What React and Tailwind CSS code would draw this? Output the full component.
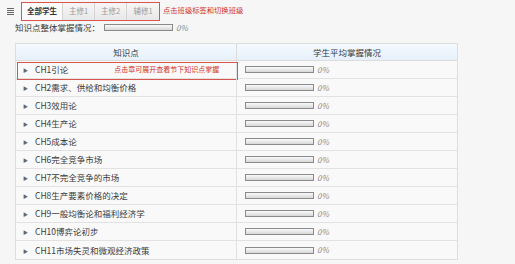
import React from "react";

const chapters = [
  "CH1引论",
  "CH2需求、供给和均衡价格",
  "CH3效用论",
  "CH4生产论",
  "CH5成本论",
  "CH6完全竞争市场",
  "CH7不完全竞争的市场",
  "CH8生产要素价格的决定",
  "CH9一般均衡论和福利经济学",
  "CH10博弈论初步",
  "CH11市场失灵和微观经济政策",
];

function Bar() {
  return (
    <div className="shrink-0 w-[69px] h-[7px] border border-[#8a8a8a] bg-gradient-to-b from-[#fafafa] to-[#d8d8d8]" />
  );
}

export default function App() {
  return (
    <div
      className="w-[515px] h-[264px] bg-[#f6f6f6] text-[#3a3a3a] text-[8.5px] leading-none overflow-hidden whitespace-nowrap"
      style={{ fontFamily: '"Noto Sans CJK SC", "Noto Sans", sans-serif' }}
    >
      {/* top tabs */}
      <div className="flex items-center h-[21px] pt-[1px]">
        <div className="w-[21px] flex justify-center">
          <div className="flex flex-col gap-[1px] w-[7px]">
            <div className="h-[1px] bg-[#666]" />
            <div className="h-[1px] bg-[#666]" />
            <div className="h-[1px] bg-[#666]" />
            <div className="h-[1px] bg-[#666]" />
          </div>
        </div>
        <div className="flex h-[19px] border border-[#d9534f] bg-gradient-to-b from-[#f6f6f6] to-[#e8e8e8] text-[7.5px]">
          <div className="w-[41px] flex items-center justify-center bg-[#fbfbfb] font-bold text-[#333] border-r border-[#d4d4d4]">
            全部学生
          </div>
          <div className="w-[32px] flex items-center justify-center text-[#9a9a9a] border-r border-[#d4d4d4]">
            主修1
          </div>
          <div className="w-[32px] flex items-center justify-center text-[#9a9a9a] border-r border-[#d4d4d4]">
            主修2
          </div>
          <div className="w-[32px] flex items-center justify-center text-[#9a9a9a]">
            辅修1
          </div>
        </div>
        <div className="ml-[3px] text-[#d0302c] text-[7.3px]">点击班级标签和切换班级</div>
      </div>

      {/* overall */}
      <div className="flex items-center h-[13px] pl-[15px]">
        <span className="shrink-0 w-[89px]">知识点整体掌握情况：</span>
        <Bar />
        <span className="ml-[3px] italic text-[#888] text-[8px]">0%</span>
      </div>

      {/* table */}
      <div className="ml-[15px] mt-[9px] w-[443px] border border-[#dedede] bg-[#f9f9f9]">
        <div className="flex h-[17px] bg-gradient-to-b from-[#f4f9fe] to-[#e6f1fb] border-b border-[#dcdcdc]">
          <div className="w-[221px] flex items-center justify-center border-r border-[#dcdcdc]">
            知识点
          </div>
          <div className="flex-1 flex items-center justify-center">学生平均掌握情况</div>
        </div>
        {chapters.map((c, i) => (
          <div key={c} className="relative flex h-[18px] border-b border-[#e2e2e2] last:border-b-0">
            <div className="w-[221px] flex items-center border-r border-[#e2e2e2]">
              <span className="w-[19px] flex justify-center text-[#666] text-[5px]">▶</span>
              <span>{c}</span>
              {i === 0 && (
                <span className="ml-[46px] text-[#d0302c] text-[7px]">点击章可展开查看节下知识点掌握</span>
              )}
            </div>
            <div className="flex-1 flex items-center pl-[8px]">
              <Bar />
              <span className="ml-[3px] italic text-[#888] text-[8px]">0%</span>
            </div>
            {i === 0 && (
              <div className="absolute left-[1px] top-[1px] w-[221px] h-[18px] border border-[#d9534f]" />
            )}
          </div>
        ))}
      </div>
    </div>
  );
}
